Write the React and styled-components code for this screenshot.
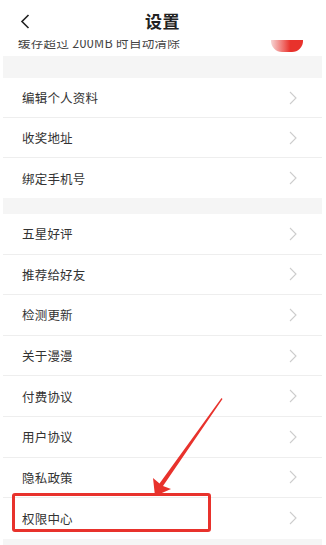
import React from "react";
import styled, { createGlobalStyle } from "styled-components";

const GlobalStyle = createGlobalStyle`
    html, body {
        margin: 0;
        padding: 0;
        background: #ffffff;
    }
    body {
        font-family: "Noto Sans CJK SC", "Noto Sans", sans-serif;
        color: #333333;
    }
`;

const groups = [
    ["编辑个人资料", "收奖地址", "绑定手机号"],
    ["五星好评", "推荐给好友", "检测更新", "关于漫漫", "付费协议", "用户协议", "隐私政策", "权限中心"],
];

const Chevron = () => (
    <svg width="8" height="14" viewBox="0 0 8 14">
        <path d="M1 1 L7 7 L1 13" fill="none" stroke="#cdcdcd" strokeWidth="1.1" />
    </svg>
);

const App = () => {
    return (
        <Page>
            <GlobalStyle />
            <Header>
                <Back>
                    <svg width="10" height="15" viewBox="0 0 10 15">
                        <path d="M8.5 1 L2 7.5 L8.5 14" fill="none" stroke="#222" strokeWidth="1.6" />
                    </svg>
                </Back>
                <Title>设置</Title>
            </Header>
            <Clip>
                <CacheRow>
                    <CacheText>缓存超过 200MB 时自动清除</CacheText>
                    <Toggle />
                </CacheRow>
            </Clip>
            <Gap $h={22} />
            {groups[0].map((label, i) => (
                <Row key={label} $last={i === groups[0].length - 1} $h={40}>
                    <Label>{label}</Label>
                    <Chevron />
                </Row>
            ))}
            <Gap $h={16} />
            {groups[1].map((label, i) => (
                <Row key={label} $last={i === groups[1].length - 1} $h={40.6}>
                    <Label>{label}</Label>
                    <Chevron />
                </Row>
            ))}
            <Gap $h={20} />
            <Mark>
                <svg width="326" height="545" viewBox="0 0 326 545">
                    <path
                        d="M221.5 398 L222.5 399 L163 486 L171 489 L155 496 L153 478 L159.5 483.5 Z"
                        fill="#e8322c"
                    />
                </svg>
            </Mark>
            <Highlight />
        </Page>
    );
};

export default App;

const Page = styled.div`
    position: relative;
    width: 326px;
    height: 545px;
    overflow: hidden;
    background: #ffffff;
    padding: 0 4px 0 3px;
    box-sizing: border-box;
`;

const Header = styled.div`
    height: 40px;
    display: flex;
    align-items: center;
    justify-content: center;
    position: relative;
    z-index: 2;
    background: #ffffff;
`;

const Back = styled.div`
    position: absolute;
    left: 17px;
    top: 14px;
    display: flex;
`;

const Title = styled.div`
    font-size: 17px;
    font-weight: 700;
    color: #222;
    margin-top: 1px;
    letter-spacing: 0.5px;
`;

const Clip = styled.div`
    height: 16px;
    overflow: hidden;
`;

const CacheRow = styled.div`
    height: 40px;
    margin-top: -18px;
    display: flex;
    align-items: center;
    justify-content: space-between;
    padding: 0 19px 0 15px;
`;

const CacheText = styled.span`
    font-size: 12.5px;
    color: #444;
    letter-spacing: 0.3px;
`;

const Toggle = styled.div`
    width: 32px;
    height: 22px;
    border-radius: 11px;
    margin-bottom: 2px;
    background: linear-gradient(90deg, #f6d4d4 0%, #ef6a66 40%, #e8322c 60%);
`;

const Gap = styled.div`
    height: ${(p) => p.$h}px;
    background: #f5f5f5;
`;

const Row = styled.div`
    height: ${(p) => p.$h}px;
    box-sizing: border-box;
    display: flex;
    align-items: center;
    justify-content: space-between;
    padding: 0 25px 0 19px;
    border-bottom: ${(p) => (p.$last ? "none" : "1px solid #eeeeee")};
`;

const Label = styled.span`
    font-size: 12.5px;
    color: #333;
    letter-spacing: 0.2px;
`;

const Mark = styled.div`
    position: absolute;
    left: 0;
    top: 0;
    pointer-events: none;
    z-index: 3;
`;

const Highlight = styled.div`
    position: absolute;
    left: 12px;
    top: 493px;
    width: 199px;
    height: 39px;
    box-sizing: border-box;
    border: 3px solid #e8322c;
    border-radius: 3px;
    z-index: 3;
`;
